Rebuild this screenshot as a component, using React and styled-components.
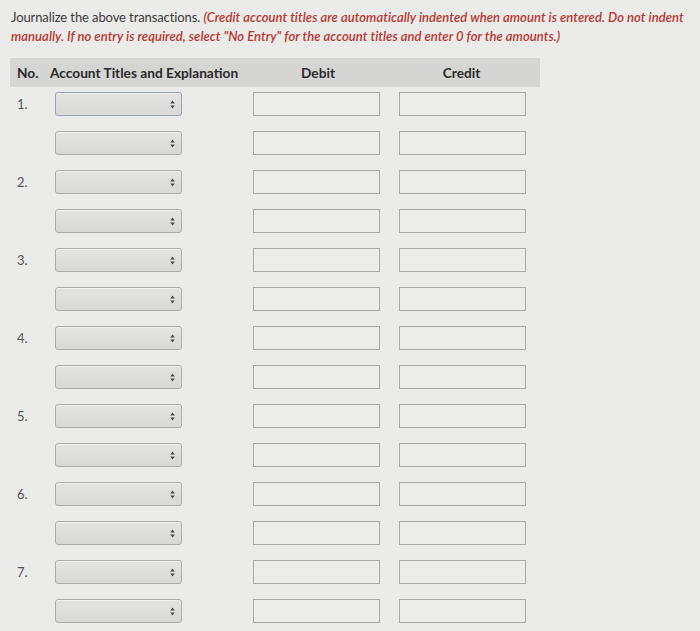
import React from "react";
import styled, { createGlobalStyle } from "styled-components";

const GlobalStyle = createGlobalStyle`
  html, body {
    margin: 0;
    padding: 0;
    background: #ebebe9;
  }
  body {
    font-family: Lato, "Open Sans", sans-serif;
  }
`;

const Page = styled.div`
  width: 700px;
  height: 631px;
  padding: 8px 10px 0 11px;
  box-sizing: border-box;
  overflow: hidden;
`;

const Instructions = styled.p`
  margin: 0;
  font-size: 13px;
  line-height: 19px;
  color: #3a3a3a;
  letter-spacing: -0.1px;
`;

const Note = styled.em`
  color: #b8352f;
  font-weight: 600;
  letter-spacing: 0.05px;
`;

const Table = styled.div`
  margin-top: 12px;
  margin-left: -1px;
  width: 530px;
`;

const Header = styled.div`
  display: flex;
  align-items: center;
  height: 29px;
  background: #d5d5d3;
  font-weight: 700;
  font-size: 13.7px;
  color: #2a2a2a;
`;

const HeadCell = styled.div`
  width: ${(p) => p.w}px;
  padding-left: ${(p) => p.pad || 0}px;
  box-sizing: border-box;
  text-align: ${(p) => (p.center ? "center" : "left")};
`;

const Body = styled.div`
  padding-top: 5px;
  display: flex;
  flex-direction: column;
  gap: 15px;
`;

const Row = styled.div`
  display: flex;
  align-items: center;
  height: 24px;
`;

const Num = styled.div`
  width: 45px;
  padding-left: 7px;
  box-sizing: border-box;
  font-size: 13px;
  color: #555;
`;

const Select = styled.div`
  width: 127px;
  height: 24px;
  box-sizing: border-box;
  border: 1px solid ${(p) => (p.focus ? "#9aa0b4" : "#ababab")};
  border-radius: 3px;
  background: linear-gradient(#e3e3e1, #d8d8d6);
  box-shadow: inset 0 1px 1px rgba(255, 255, 255, 0.6);
  display: flex;
  align-items: center;
  justify-content: flex-end;
  padding-right: 6px;
`;

const Input = styled.div`
  width: 127px;
  height: 24px;
  box-sizing: border-box;
  border: 1px solid #a9a9a9;
  background: #ececea;
  margin-left: ${(p) => p.gap}px;
`;

const Spacer = styled.div`
  width: 71px;
`;

const Arrows = () => (
  <svg width="5" height="9" viewBox="0 0 5 9">
    <path d="M2.5 0.5 L4.8 3.6 L0.2 3.6 Z" fill="#4a4a4a" />
    <path d="M2.5 8.5 L4.8 5.4 L0.2 5.4 Z" fill="#4a4a4a" />
  </svg>
);

const rows = Array.from({ length: 14 }, (_, i) => i);

export default function App() {
  return (
    <>
      <GlobalStyle />
      <Page>
        <Instructions>
          Journalize the above transactions.{" "}
          <Note>
            (Credit account titles are automatically indented when amount is
            entered. Do not indent manually. If no entry is required, select
            "No Entry" for the account titles and enter 0 for the amounts.)
          </Note>
        </Instructions>
        <Table>
          <Header>
            <HeadCell w={40} pad={7}>
              No.
            </HeadCell>
            <HeadCell w={203}>Account Titles and Explanation</HeadCell>
            <HeadCell w={130} center>
              Debit
            </HeadCell>
            <HeadCell w={157} center>
              Credit
            </HeadCell>
          </Header>
          <Body>
            {rows.map((i) => (
              <Row key={i}>
                <Num>{i % 2 === 0 ? `${i / 2 + 1}.` : ""}</Num>
                <Select focus={i === 0}>
                  <Arrows />
                </Select>
                <Spacer />
                <Input gap={0} />
                <Input gap={19} />
              </Row>
            ))}
          </Body>
        </Table>
      </Page>
    </>
  );
}
